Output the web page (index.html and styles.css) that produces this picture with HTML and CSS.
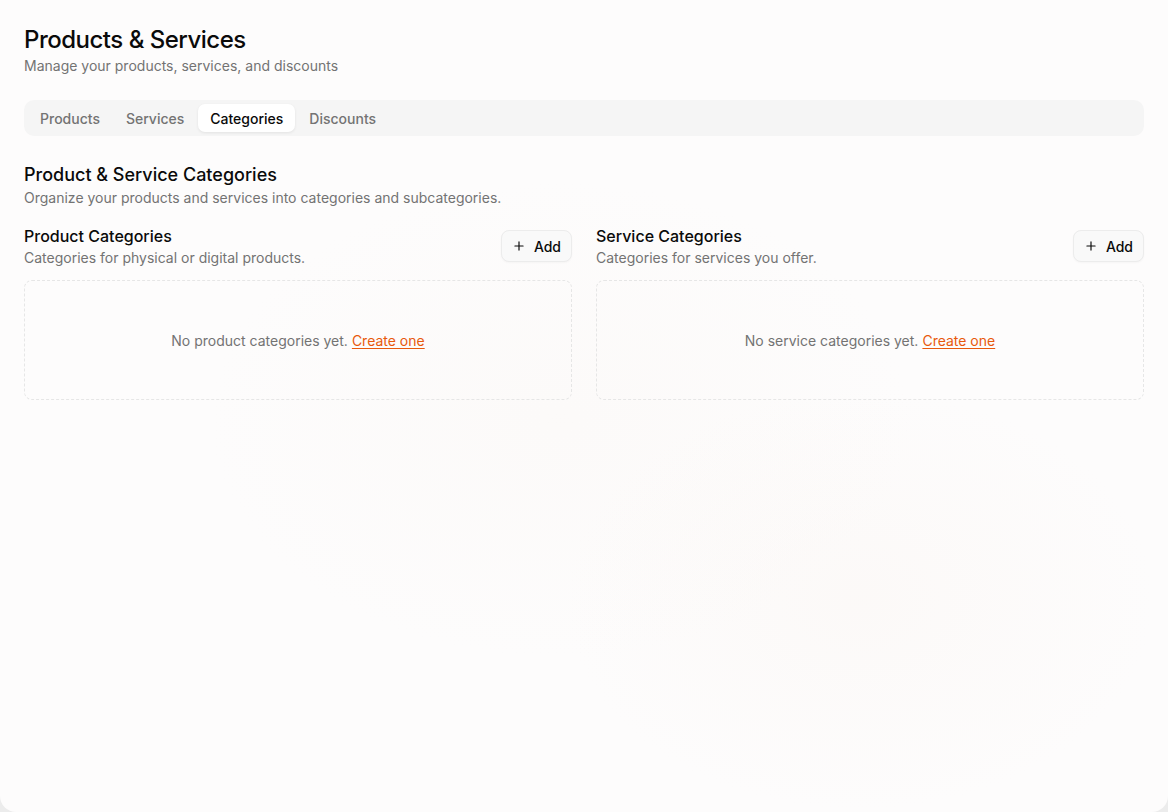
FILE: index.html
```html
<!DOCTYPE html>
<html lang="en">
<head>
    <meta charset="UTF-8">
    <meta name="viewport" content="width=device-width, initial-scale=1.0">
    <title>Products &amp; Services</title>
    <link rel="stylesheet" href="styles.css">
</head>
<body>
    <div class="page">
        <div class="header">
            <h1>Products &amp; Services</h1>
            <p class="muted">Manage your products, services, and discounts</p>
        </div>

        <div class="tabs">
            <button class="tab">Products</button>
            <button class="tab">Services</button>
            <button class="tab active">Categories</button>
            <button class="tab">Discounts</button>
        </div>

        <div class="section">
            <h2>Product &amp; Service Categories</h2>
            <p class="muted">Organize your products and services into categories and subcategories.</p>
        </div>

        <div class="columns">
            <div class="column">
                <div class="column-head">
                    <div>
                        <h3>Product Categories</h3>
                        <p class="muted">Categories for physical or digital products.</p>
                    </div>
                    <button class="add-btn">
                        <svg width="14" height="14" viewBox="0 0 24 24" fill="none" stroke="currentColor" stroke-width="2" stroke-linecap="round"><path d="M12 5v14M5 12h14"/></svg>
                        Add
                    </button>
                </div>
                <div class="empty">
                    No product categories yet. <a href="#">Create one</a>
                </div>
            </div>
            <div class="column">
                <div class="column-head">
                    <div>
                        <h3>Service Categories</h3>
                        <p class="muted">Categories for services you offer.</p>
                    </div>
                    <button class="add-btn">
                        <svg width="14" height="14" viewBox="0 0 24 24" fill="none" stroke="currentColor" stroke-width="2" stroke-linecap="round"><path d="M12 5v14M5 12h14"/></svg>
                        Add
                    </button>
                </div>
                <div class="empty">
                    No service categories yet. <a href="#">Create one</a>
                </div>
            </div>
        </div>
    </div>
</body>
</html>
```

FILE: styles.css
```css
*{
    box-sizing: border-box;
    font-family: Inter, 'Noto Sans', sans-serif;
}
html, body{
    margin: 0;
    height: 100%;
    background: #ececec;
}
.page{
    height: 812px;
    padding: 24px;
    border-radius: 0 0 16px 16px;
    background:
        radial-gradient(ellipse 420px 300px at 860px 600px, rgba(250, 244, 240, 0.35), transparent 70%),
        radial-gradient(ellipse 500px 340px at 560px 420px, rgba(250, 246, 243, 0.35), transparent 70%),
        #fdfcfc;
    color: #0a0a0a;
}
h1, h2, h3, p{
    margin: 0;
}
h1{
    font-size: 24px;
    font-weight: 500;
    line-height: 32px;
    letter-spacing: -0.5px;
}
.muted{
    font-size: 14px;
    line-height: 20px;
    color: #737373;
}
.tabs{
    display: flex;
    gap: 2px;
    margin-top: 24px;
    padding: 4px;
    height: 36px;
    background: #f5f5f5;
    border-radius: 10px;
}
.tab{
    border: none;
    background: transparent;
    padding: 0 12px;
    font-size: 14px;
    font-weight: 500;
    color: #737373;
    border-radius: 7px;
    cursor: pointer;
}
.tab.active{
    background: #fff;
    color: #0a0a0a;
    box-shadow: 0 1px 3px rgba(0, 0, 0, 0.08);
}
.section{
    margin-top: 26px;
}
h2{
    font-size: 18px;
    font-weight: 500;
    line-height: 26px;
}
.columns{
    display: grid;
    grid-template-columns: 1fr 1fr;
    gap: 24px;
    margin-top: 16px;
}
.column-head{
    display: flex;
    justify-content: space-between;
    align-items: flex-start;
}
h3{
    font-size: 16px;
    font-weight: 500;
    line-height: 24px;
}
.add-btn{
    display: flex;
    align-items: center;
    gap: 8px;
    height: 32px;
    margin-top: 6px;
    padding: 0 10px;
    background: #f9f9f9;
    border: 1px solid #ececec;
    border-radius: 8px;
    font-size: 14px;
    font-weight: 500;
    color: #0a0a0a;
    box-shadow: 0 1px 2px rgba(0, 0, 0, 0.03);
}
.empty{
    display: flex;
    align-items: center;
    justify-content: center;
    height: 120px;
    margin-top: 12px;
    border: 1px dashed #e6e6e6;
    border-radius: 8px;
    font-size: 14px;
    color: #737373;
    gap: 4px;
}
.empty a{
    color: #e8590c;
    text-decoration: underline;
    text-underline-offset: 2px;
}
```
